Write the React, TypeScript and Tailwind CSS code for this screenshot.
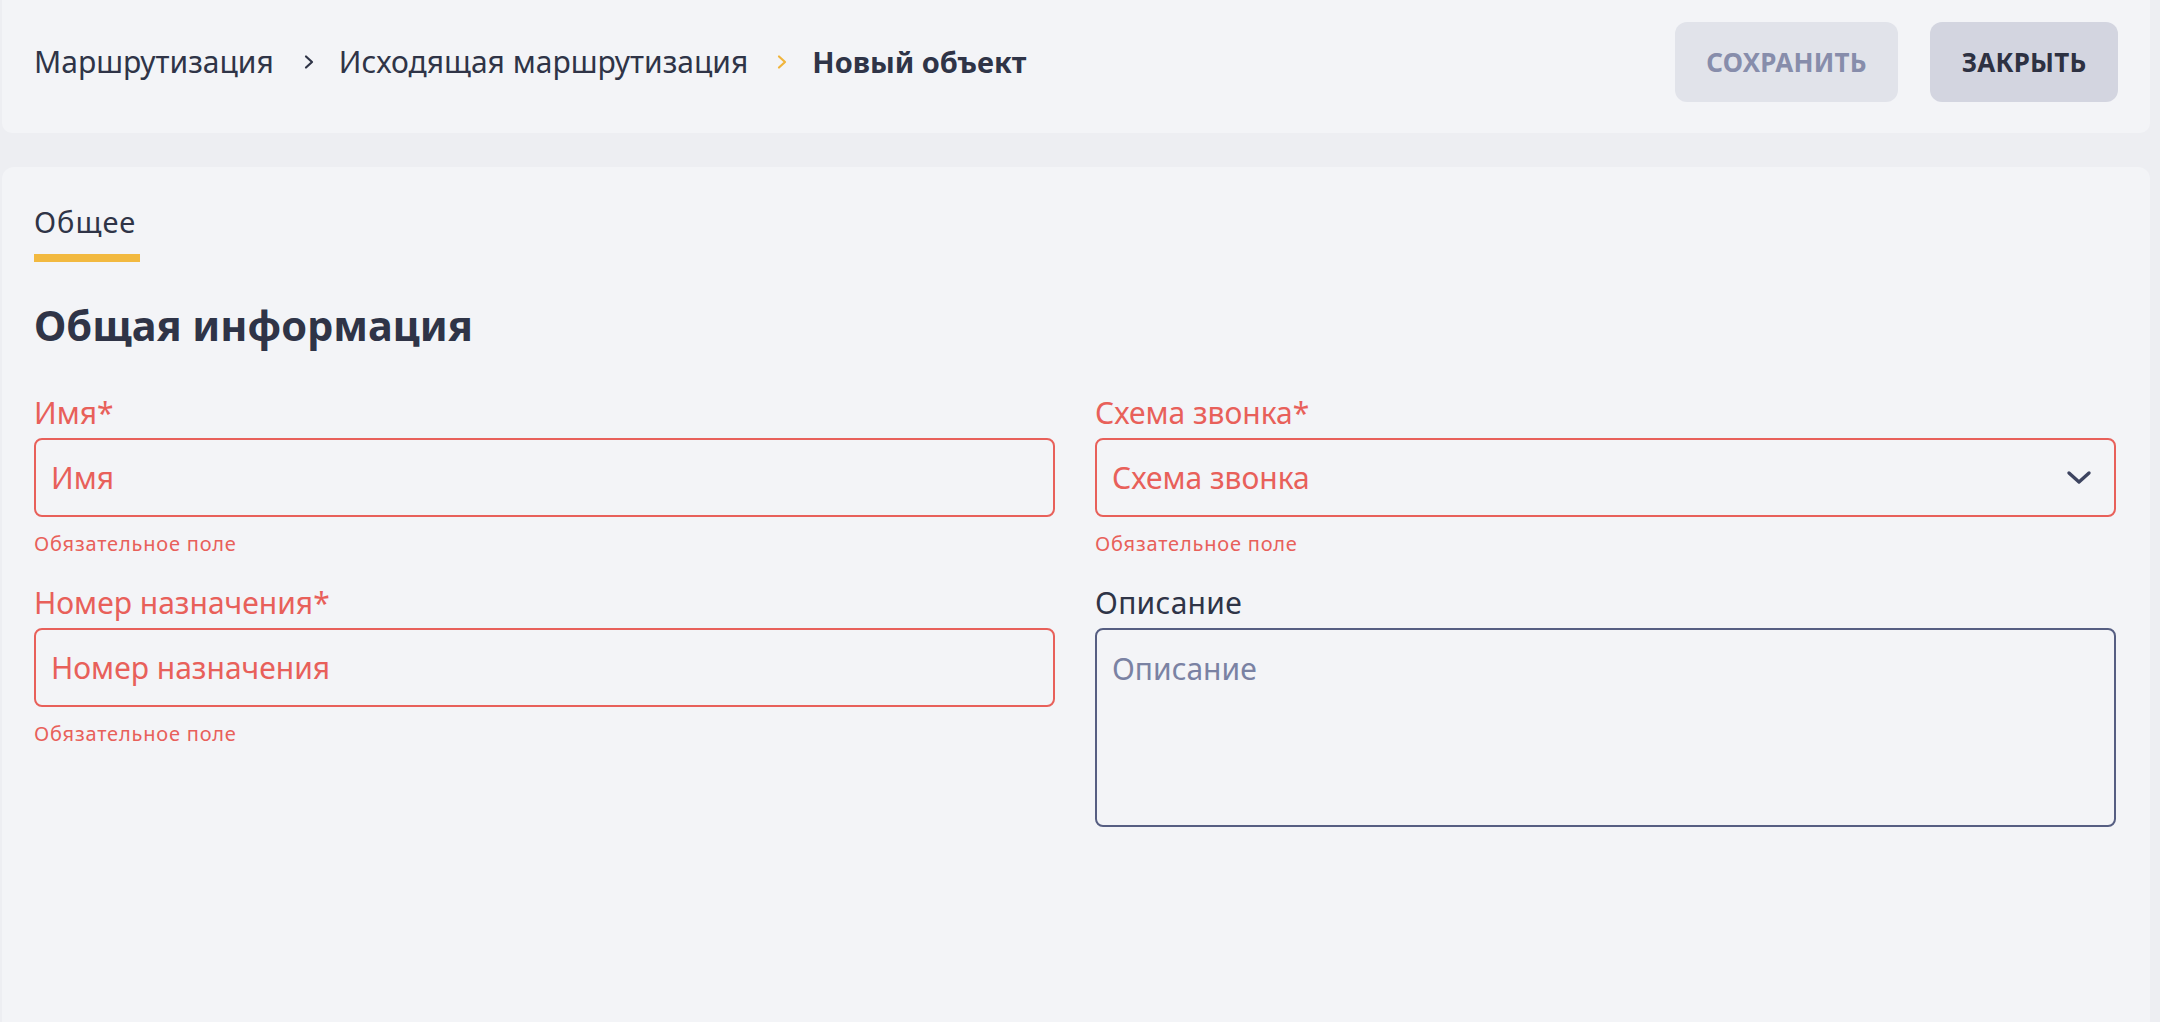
import React from "react";

const font = { fontFamily: '"Noto Sans", "Open Sans", Arial, sans-serif' };

function Chevron({ color, className }: { color: string; className: string }) {
  return (
    <svg width="12" height="16" viewBox="0 0 12 16" fill="none" className={className}>
      <path d="M3 2.5 L9 8 L3 13.5" stroke={color} strokeWidth="2.2" strokeLinecap="round" strokeLinejoin="round" />
    </svg>
  );
}

function ErrorText() {
  return <div className="mt-[14px] text-[20px] leading-[26px] tracking-[0.8px] text-[#e8605a]">Обязательное поле</div>;
}

function Field({ label, placeholder, select }: { label: string; placeholder: string; select?: boolean }) {
  return (
    <div className="flex flex-col">
      <div className="text-[30px] leading-[36px] text-[#e8605a]">{label}*</div>
      <div className="mt-[7px] h-[79px] rounded-[8px] border-2 border-[#e8605a] flex items-center justify-between pl-[15px] pr-[21px]">
        <span className="text-[30px] leading-[36px] text-[#e8605a]">{placeholder}</span>
        {select && (
          <svg width="28" height="18" viewBox="0 0 28 18" fill="none">
            <path d="M4 4 L14 13 L24 4" stroke="#3d4460" strokeWidth="3.4" strokeLinecap="round" strokeLinejoin="round" />
          </svg>
        )}
      </div>
      <ErrorText />
    </div>
  );
}

export default function App() {
  return (
    <div className="min-h-screen bg-[#edeef2] flex flex-col pl-[2px] pr-[10px]" style={font}>
      <div className="h-[133px] bg-[#f3f4f7] rounded-b-[10px] flex items-start justify-between pl-[32px] pr-[32px] pt-[22px]">
        <div className="h-[80px] flex items-center">
          <span className="text-[30px] text-[#2f3447] leading-[36px]">Маршрутизация</span>
          <Chevron color="#2f3447" className="ml-[29px] mr-[24px]" />
          <span className="text-[30px] text-[#2f3447] leading-[36px]">Исходящая маршрутизация</span>
          <Chevron color="#f0b43c" className="ml-[28px] mr-[24px]" />
          <span className="text-[29px] text-[#2f3447] leading-[36px] font-bold">Новый объект</span>
        </div>
        <div className="flex gap-[32px]">
          <button className="h-[80px] w-[223px] rounded-[12px] bg-[#e1e3ea] text-[#878dab] text-[26px] font-bold tracking-[0.2px]">СОХРАНИТЬ</button>
          <button className="h-[80px] w-[188px] rounded-[12px] bg-[#d3d5e0] text-[#2d3142] text-[26px] font-bold tracking-[0.2px]">ЗАКРЫТЬ</button>
        </div>
      </div>
      <div className="mt-[34px] flex-1 bg-[#f3f4f7] rounded-t-[12px] pl-[32px] pr-[34px] pt-[37px]">
        <div className="inline-flex flex-col">
          <span className="text-[29px] leading-[36px] tracking-[1px] text-[#2f3447]">Общее</span>
          <div className="mt-[14px] h-[8px] w-[106px] bg-[#f2b940]" />
        </div>
        <h1 className="mt-[38px] text-[41.5px] leading-[50px] font-bold text-[#2f3447]">Общая информация</h1>
        <div className="mt-[45px] grid grid-cols-2 gap-x-[40px]">
          <div className="flex flex-col gap-[28px]">
            <Field label="Имя" placeholder="Имя" />
            <Field label="Номер назначения" placeholder="Номер назначения" />
          </div>
          <div className="flex flex-col gap-[28px]">
            <Field label="Схема звонка" placeholder="Схема звонка" select />
            <div className="flex flex-col">
              <div className="text-[30px] leading-[36px] tracking-[0.3px] text-[#2f3447]">Описание</div>
              <textarea
                placeholder="Описание"
                className="mt-[7px] h-[199px] rounded-[8px] border-2 border-[#565e82] bg-transparent px-[15px] pt-[21px] text-[30px] leading-[36px] text-[#2f3447] placeholder:text-[#7a82a3] outline-none resize-none"
              />
            </div>
          </div>
        </div>
      </div>
    </div>
  );
}
